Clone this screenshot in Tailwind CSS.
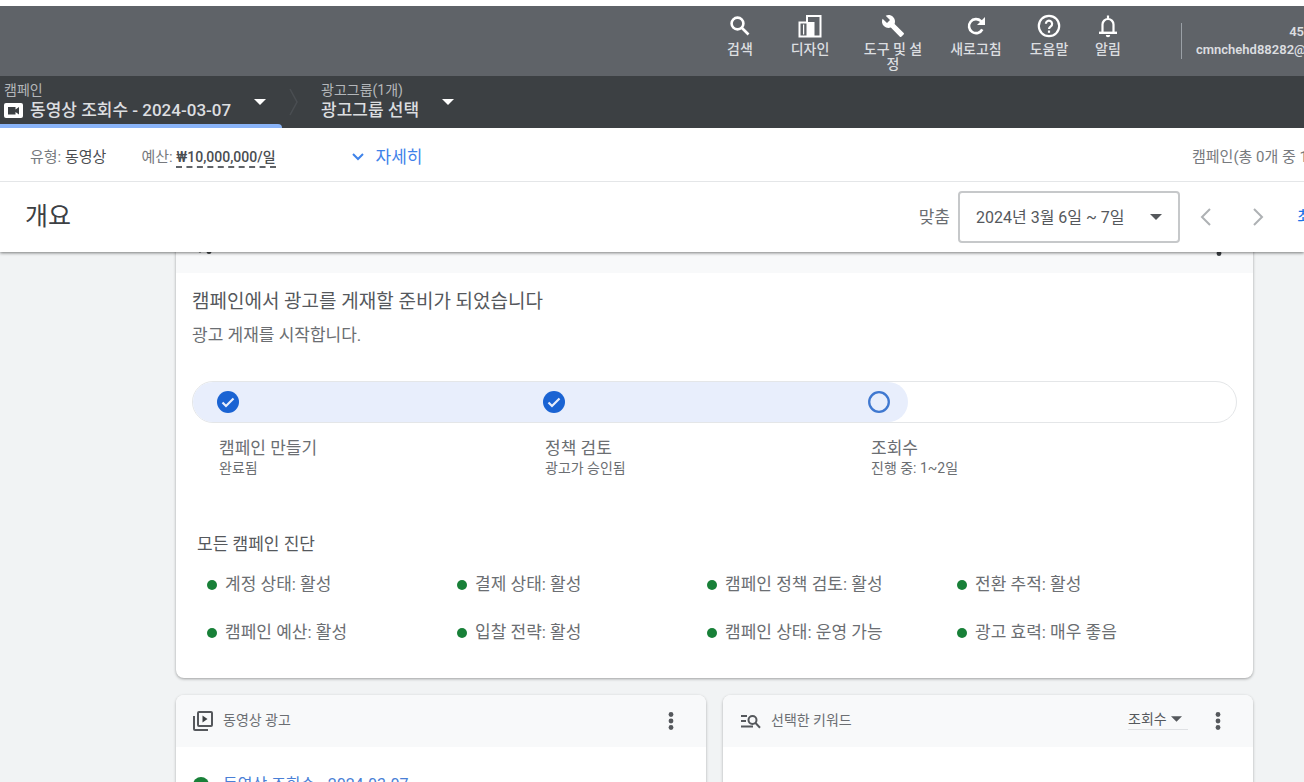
<!DOCTYPE html>
<html lang="ko">
<head>
<meta charset="utf-8">
<meta name="viewport" content="width=device-width, initial-scale=1">
<title>개요</title>
<script src="https://cdn.jsdelivr.net/npm/@tailwindcss/browser@4"></script>
</head>
<body class="flex h-screen flex-col overflow-hidden bg-[#f1f3f4] font-['Roboto','Noto_Sans_CJK_KR',sans-serif] text-[17px] leading-6 text-[#6b6e72]">

<header class="relative z-10 shrink-0 bg-white shadow-[0_1px_3px_rgba(0,0,0,0.5)]">
  <div class="mt-[6px] flex h-[70px] items-start justify-end bg-[#5f6368] text-[14px] leading-[15px] font-medium text-[#dcdee0]">
    <nav class="flex items-start pt-2" aria-label="도구">
      <button class="flex w-[62px] flex-col items-center gap-1">
        <svg class="size-6 text-white" viewBox="0 0 24 24" fill="none" stroke="currentColor" stroke-width="2.6"><circle cx="9.5" cy="9.5" r="5.9"/><path d="M14 14l6.500 6.500"/></svg>
        <span>검색</span>
      </button>
      <button class="flex w-[78px] flex-col items-center gap-1">
        <svg class="size-6 text-white" viewBox="0 0 24 24" fill="none" stroke="currentColor" stroke-width="2"><path d="M9 8V2h13.500v20.500H1.500V8.500H9"/><path d="M8.500 8h8v14h-8z" fill="currentColor" stroke="none"/><path d="M5.600 10.500v10" stroke-width="1.200"/></svg>
        <span>디자인</span>
      </button>
      <button class="flex w-[88px] flex-col items-center gap-1 px-[14px]">
        <svg class="size-6 text-white" viewBox="0 0 24 24" fill="currentColor"><path d="M22.700 19l-9.100-9.100c.9-2.300.4-5-1.500-6.900-2-2-5-2.400-7.400-1.300L9 6 6 9 1.600 4.700C.4 7.100.9 10.100 2.900 12.100c1.900 1.900 4.600 2.400 6.900 1.500l9.100 9.100c.4.4 1 .4 1.400 0l2.300-2.300c.5-.4.5-1.100.1-1.400z"/></svg>
        <span>도구 및 설정</span>
      </button>
      <button class="flex w-[78px] flex-col items-center gap-1">
        <svg class="size-6 text-white" viewBox="0 0 24 24" fill="none" stroke="currentColor" stroke-width="2.600"><path d="M18.300 15.300A7 7 0 1 1 17 7.200l1.500 1.600"/><path d="M21 3v8h-8z" fill="currentColor" stroke="none"/></svg>
        <span>새로고침</span>
      </button>
      <button class="flex w-[68px] flex-col items-center gap-1">
        <svg class="size-6 text-white" viewBox="0 0 24 24" fill="none" stroke="currentColor" stroke-width="2.200"><circle cx="12" cy="12" r="10.200"/><path d="M8.900 9.800a3.100 3.100 0 1 1 4.900 2.500c-1.100.8-1.800 1.300-1.800 2.700"/><path d="M12 16.500v2.300"/></svg>
        <span>도움말</span>
      </button>
      <button class="flex w-[50px] flex-col items-center gap-1">
        <svg class="size-6 text-white" viewBox="0 0 24 24" fill="none" stroke="currentColor" stroke-width="2.200"><path d="M6.500 18.500v-8a5.500 5.500 0 0 1 11 0v8"/><path d="M3 18.800h18" stroke-width="2.400"/><path d="M12 1.500v3.500"/><path d="M9.800 21h4.400a2.200 2.200 0 0 1-4.400 0z" fill="currentColor" stroke="none"/></svg>
        <span>알림</span>
      </button>
    </nav>
    <div class="mt-[17px] ml-[48px] h-9 w-px bg-[#9aa0a6]"></div>
    <div class="mt-[17px] ml-[14px] w-[108px] overflow-hidden text-[13px] leading-[18px] font-semibold whitespace-nowrap">
      <p class="text-right">45</p>
      <p>cmnchehd88282@</p>
    </div>
  </div>

  <div class="flex h-[52px] bg-[#3c4043] text-[#dcdee0]">
    <div class="relative flex w-[282px] items-center justify-between pr-4 pl-1">
      <div>
        <label for="campaign" class="block text-[14px] leading-4 text-[#b4b7ba]">캠페인</label>
        <div class="flex items-center gap-[7px]">
          <svg class="h-[15px] w-[19px]" viewBox="0 0 19 15"><rect width="19" height="15" rx="2" fill="#fff"/><path d="M4 4h7.500v2.500L15 4v7.500l-3.500-2.500v2.500H4z" fill="#3c4043"/></svg>
          <select id="campaign" class="appearance-none bg-transparent leading-6 font-medium"><option>동영상 조회수 - 2024-03-07</option></select>
        </div>
      </div>
      <svg class="pointer-events-none h-[6px] w-3" viewBox="0 0 12 6"><path d="M0 0h12L6 6z" fill="#fff"/></svg>
      <div class="absolute inset-x-0 bottom-0 h-1 rounded-tr-sm bg-[#8ab4f8]"></div>
    </div>
    <svg class="mt-3 ml-[7px] h-7 w-[10px]" viewBox="0 0 10 28" fill="none" stroke="#4a4e52" stroke-width="1.500"><path d="M1 1l7 13-7 13"/></svg>
    <div class="ml-[22px] flex w-[133px] items-center justify-between">
      <div>
        <label for="adgroup" class="block text-[14px] leading-4 text-[#b4b7ba]">광고그룹(1개)</label>
        <select id="adgroup" class="block appearance-none bg-transparent leading-6 font-medium"><option>광고그룹 선택</option></select>
      </div>
      <svg class="pointer-events-none h-[6px] w-3" viewBox="0 0 12 6"><path d="M0 0h12L6 6z" fill="#fff"/></svg>
    </div>
  </div>

  <div class="flex h-[54px] items-center border-b border-[#e4e6e8] pt-1 text-[15px] whitespace-nowrap text-[#777a7e]">
    <p class="ml-[30px]">유형: <span class="text-[#4a4d51]">동영상</span></p>
    <p class="ml-[35px]">예산: <button class="border-b-2 border-dashed border-[#5f6368] text-[14px] leading-[18px] font-medium text-[#4a4d51]">₩10,000,000/일</button></p>
    <button class="ml-[76px] flex items-center gap-3 text-[17px] text-[#3f83ea]">
      <svg class="h-2 w-3" viewBox="0 0 12 8" fill="none" stroke="currentColor" stroke-width="2"><path d="M1 1l5 5 5-5"/></svg>
      자세히
    </button>
    <p class="ml-auto w-28 overflow-hidden">캠페인(총 0개 중 1</p>
  </div>

  <div class="flex h-[70px] items-center whitespace-nowrap">
    <h1 class="ml-[25px] text-[25px] leading-8 text-[#3c4043]">개요</h1>
    <label for="range" class="mr-2 ml-auto">맞춤</label>
    <div class="flex h-[52px] w-[222px] items-center justify-between rounded border-2 border-[#c6c8ca] pr-4 pl-4">
      <select id="range" class="appearance-none bg-transparent pt-[2px] text-[16px] text-[#55585c]"><option>2024년 3월 6일 ~ 7일</option></select>
      <svg class="pointer-events-none h-[6px] w-3" viewBox="0 0 12 6"><path d="M0 0h12L6 6z" fill="#55585c"/></svg>
    </div>
    <button class="ml-5" aria-label="이전"><svg class="h-[18px] w-[11px]" viewBox="0 0 11 18" fill="none" stroke="#aeb1b4" stroke-width="2"><path d="M10 1L2 9l8 8"/></svg></button>
    <button class="ml-[42px]" aria-label="다음"><svg class="h-[18px] w-[11px]" viewBox="0 0 11 18" fill="none" stroke="#aeb1b4" stroke-width="2"><path d="M1 1l8 8-8 8"/></svg></button>
    <a href="#" class="ml-[33px] w-[7px] overflow-hidden text-[#1a73e8]">최</a>
  </div>
</header>

<main class="flex-1 overflow-hidden pr-[51px] pl-44">
  <section class="-mt-[31px] rounded-lg bg-white pb-[34px] shadow-[0_1px_3px_rgba(0,0,0,0.35)]">
    <div class="flex h-[52px] items-center justify-between bg-[#f8f9fa] pr-[30px] pl-4">
      <svg class="h-4 w-6" viewBox="0 0 24 16" fill="#3c4043"><circle cx="8" cy="12" r="1.500"/><circle cx="17" cy="12.500" r="2.500"/><path d="M4 2h14v2H4z"/></svg>
      <button aria-label="더보기"><svg class="h-[18px] w-2" viewBox="0 0 8 18" fill="#3c4043"><circle cx="4" cy="2.500" r="2.400"/><circle cx="4" cy="9" r="2.400"/><circle cx="4" cy="15.500" r="2.400"/></svg></button>
    </div>
    <div class="px-4 pt-[17px]">
      <h2 class="text-[19px] text-[#55585c]">캠페인에서 광고를 게재할 준비가 되었습니다</h2>
      <p class="mt-[9px]">광고 게재를 시작합니다.</p>

      <div class="relative mt-[34px] h-[42px] rounded-full border border-[#e4e6e8] pr-[42px] pl-[24px]">
        <div class="absolute inset-y-0 left-0 w-[68.6%] rounded-full bg-[#e8eefc]"></div>
        <div class="relative grid h-full grid-cols-3 items-center">
          <svg class="size-[22px]" viewBox="0 0 22 22"><circle cx="11" cy="11" r="11" fill="#1a63d3"/><path d="M5.500 11.500l3.500 3.500 7.500-7.500" fill="none" stroke="#e8eefc" stroke-width="2.200"/></svg>
          <svg class="size-[22px]" viewBox="0 0 22 22"><circle cx="11" cy="11" r="11" fill="#1a63d3"/><path d="M5.500 11.500l3.500 3.500 7.500-7.500" fill="none" stroke="#e8eefc" stroke-width="2.200"/></svg>
          <svg class="size-[22px]" viewBox="0 0 22 22"><circle cx="11" cy="11" r="9.800" fill="none" stroke="#3f78d0" stroke-width="2.300"/></svg>
        </div>
      </div>
      <ol class="mt-[13px] grid grid-cols-3 pr-[40px] pl-[27px]">
        <li><p>캠페인 만들기</p><p class="text-[14px] leading-4">완료됨</p></li>
        <li><p>정책 검토</p><p class="text-[14px] leading-4">광고가 승인됨</p></li>
        <li><p>조회수</p><p class="text-[14px] leading-4">진행 중: 1~2일</p></li>
      </ol>

      <h3 class="mt-[56px] ml-[5px] text-[#55585c]">모든 캠페인 진단</h3>
      <ul class="mt-4 grid grid-cols-4 gap-y-6 pr-[30px] pl-[15px]">
        <li class="flex items-center gap-2"><span class="mt-[2px] size-[10px] rounded-full bg-[#188038]"></span>계정 상태: 활성</li>
        <li class="flex items-center gap-2"><span class="mt-[2px] size-[10px] rounded-full bg-[#188038]"></span>결제 상태: 활성</li>
        <li class="flex items-center gap-2"><span class="mt-[2px] size-[10px] rounded-full bg-[#188038]"></span>캠페인 정책 검토: 활성</li>
        <li class="flex items-center gap-2"><span class="mt-[2px] size-[10px] rounded-full bg-[#188038]"></span>전환 추적: 활성</li>
        <li class="flex items-center gap-2"><span class="mt-[2px] size-[10px] rounded-full bg-[#188038]"></span>캠페인 예산: 활성</li>
        <li class="flex items-center gap-2"><span class="mt-[2px] size-[10px] rounded-full bg-[#188038]"></span>입찰 전략: 활성</li>
        <li class="flex items-center gap-2"><span class="mt-[2px] size-[10px] rounded-full bg-[#188038]"></span>캠페인 상태: 운영 가능</li>
        <li class="flex items-center gap-2"><span class="mt-[2px] size-[10px] rounded-full bg-[#188038]"></span>광고 효력: 매우 좋음</li>
      </ul>
    </div>
  </section>

  <div class="mt-[17px] grid grid-cols-2 gap-[17px]">
    <section class="rounded-lg bg-white pb-10 shadow-[0_1px_3px_rgba(0,0,0,0.3)]">
      <div class="flex h-[52px] items-center rounded-t-lg bg-[#f8f9fa] pr-8 pl-[17px] text-[14px]">
        <svg class="size-5" viewBox="0 0 20 20" fill="none" stroke="#55585c" stroke-width="2"><rect x="5" y="1" width="14" height="14" rx="1"/><path d="M1 5v13a1 1 0 0 0 1 1h13"/><path d="M9.500 4.500v7l5-3.500z" fill="#3c4043" stroke="none"/></svg>
        <h2 class="ml-[10px] pb-[2px]">동영상 광고</h2>
        <button class="ml-auto" aria-label="더보기"><svg class="h-[18px] w-[6px]" viewBox="0 0 6 18" fill="#55585c"><circle cx="3" cy="2.500" r="2.400"/><circle cx="3" cy="9" r="2.400"/><circle cx="3" cy="15.500" r="2.400"/></svg></button>
      </div>
      <div class="flex items-center gap-[14px] pt-[26px] pl-[17px]">
        <span class="size-4 rounded-full bg-[#188038]"></span>
        <a href="#" class="text-[16px] text-[#4a7fd6]">동영상 조회수 - 2024-03-07</a>
      </div>
    </section>
    <section class="rounded-lg bg-white shadow-[0_1px_3px_rgba(0,0,0,0.3)]">
      <div class="flex h-[52px] items-center rounded-t-lg bg-[#f8f9fa] pr-8 pl-[18px] text-[14px]">
        <svg class="h-[15px] w-5" viewBox="0 0 20 15" fill="none" stroke="#55585c" stroke-width="2"><path d="M0 2h6M0 7h5M0 12.500h12"/><circle cx="11.500" cy="6" r="4"/><path d="M14.300 8.800l4.700 5"/></svg>
        <h2 class="ml-[10px] pb-[2px]">선택한 키워드</h2>
        <div class="mr-[27px] mb-[3px] ml-auto flex w-[60px] items-center gap-1 border-b border-[#dfe1e4] leading-5 text-[#55585c]">
          <select aria-label="측정항목" class="appearance-none bg-transparent leading-5"><option>조회수</option></select>
          <svg class="pointer-events-none h-[6px] w-[11px]" viewBox="0 0 12 6"><path d="M0 0h12L6 6z" fill="#55585c"/></svg>
        </div>
        <button aria-label="더보기"><svg class="h-[18px] w-[6px]" viewBox="0 0 6 18" fill="#55585c"><circle cx="3" cy="2.500" r="2.400"/><circle cx="3" cy="9" r="2.400"/><circle cx="3" cy="15.500" r="2.400"/></svg></button>
      </div>
    </section>
  </div>
</main>
</body>
</html>
